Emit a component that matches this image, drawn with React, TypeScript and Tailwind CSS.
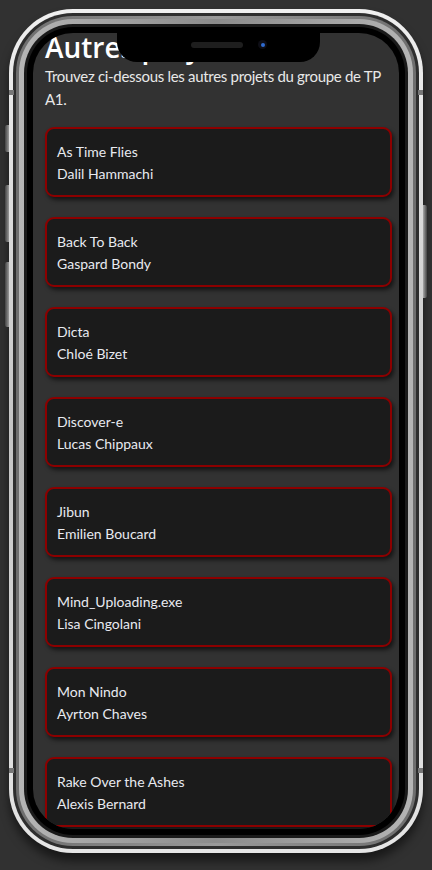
import React from "react";

const projects = [
  ["As Time Flies", "Dalil Hammachi"],
  ["Back To Back", "Gaspard Bondy"],
  ["Dicta", "Chloé Bizet"],
  ["Discover-e", "Lucas Chippaux"],
  ["Jibun", "Emilien Boucard"],
  ["Mind_Uploading.exe", "Lisa Cingolani"],
  ["Mon Nindo", "Ayrton Chaves"],
  ["Rake Over the Ashes", "Alexis Bernard"],
];

export default function App() {
  return (
    <div
      className="w-[432px] h-[870px] bg-[#313131] overflow-hidden pt-[9px] pl-[9px]"
      style={{ fontFamily: "Lato, 'Open Sans', sans-serif" }}
    >
      <div className="relative w-[414px] h-[844px] rounded-[64px] shadow-[0_8px_10px_rgba(0,0,0,0.5)]">
        {/* side buttons */}
        <div className="absolute left-[-4px] top-[116px] w-[4px] h-[27px] rounded-l-[2px] bg-gradient-to-r from-[#444] to-[#999]" />
        <div className="absolute left-[-4px] top-[176px] w-[4px] h-[57px] rounded-l-[2px] bg-gradient-to-r from-[#444] to-[#999]" />
        <div className="absolute left-[-4px] top-[253px] w-[4px] h-[65px] rounded-l-[2px] bg-gradient-to-r from-[#444] to-[#999]" />
        <div className="absolute right-[-4px] top-[196px] w-[4px] h-[93px] rounded-r-[2px] bg-gradient-to-l from-[#444] to-[#aaa]" />
        <div className="h-full rounded-[64px] bg-gradient-to-b from-[#f0f0f0] via-[#c4c4c4] to-[#e6e6e6] p-[4px]">
          <div className="h-full rounded-[60px] bg-[#2e2e2e] p-[3px]">
            <div className="h-full rounded-[57px] bg-gradient-to-r from-[#6e6e6e] via-[#9a9a9a] to-[#6e6e6e] p-[3px]">
              <div className="h-full rounded-[54px] bg-gradient-to-r from-[#b5b5b5] via-[#8c8c8c] to-[#b5b5b5] p-[5px]">
                <div className="h-full rounded-[49px] bg-[#1a1a1a] p-[3px]">
                  <div className="h-full rounded-[46px] bg-black p-[6px]">
                    <div className="relative h-full rounded-[40px] bg-[#323232] overflow-hidden">
                      {/* notch */}
                      <div className="absolute left-[84px] top-0 w-[203px] h-[29px] bg-black rounded-b-[20px] z-10 flex items-start pl-[74px] pt-[9px] gap-[15px]">
                        <div className="w-[52px] h-[6px] rounded-full bg-[#1e1e1e]" />
                        <div className="mt-[-2px] w-[9px] h-[9px] rounded-full bg-[#0e0e16] flex items-center justify-center">
                          <div className="w-[4px] h-[4px] rounded-full bg-[#2f6bd0]" />
                        </div>
                      </div>
                      <div className="pl-[12px] pr-[7px]">
                        <h1
                          className="text-[28px] leading-[32px] font-semibold text-white mt-[-2px]"
                          style={{ fontFamily: "'Open Sans', sans-serif" }}
                        >
                          Autres projets
                        </h1>
                        <p className="text-[15px] leading-[23px] tracking-[-0.3px] text-[#e8e8e8] mt-[2px]">
                          Trouvez ci-dessous les autres projets du groupe de TP A1.
                        </p>
                        <div className="flex flex-col gap-[20px] mt-[16px]">
                          {projects.map(([t, a]) => (
                            <div
                              key={t}
                              className="h-[70px] shrink-0 rounded-[9px] border-2 border-[#8c0000] bg-[#1b1b1b] pl-[10px] pt-[12px] text-[14px] leading-[22px] text-[#e8eaf0] shadow-[2px_3px_4px_rgba(0,0,0,0.6)]"
                            >
                              <div>{t}</div>
                              <div>{a}</div>
                            </div>
                          ))}
                        </div>
                      </div>
                    </div>
                  </div>
                </div>
              </div>
            </div>
          </div>
        </div>
        {/* antenna bands */}
        <div className="absolute left-0 top-[81px] w-[5px] h-[5px] bg-[#777]" />
        <div className="absolute right-0 top-[81px] w-[5px] h-[5px] bg-[#777]" />
        <div className="absolute left-0 top-[759px] w-[5px] h-[5px] bg-[#777]" />
        <div className="absolute right-0 top-[759px] w-[5px] h-[5px] bg-[#777]" />
      </div>
    </div>
  );
}
